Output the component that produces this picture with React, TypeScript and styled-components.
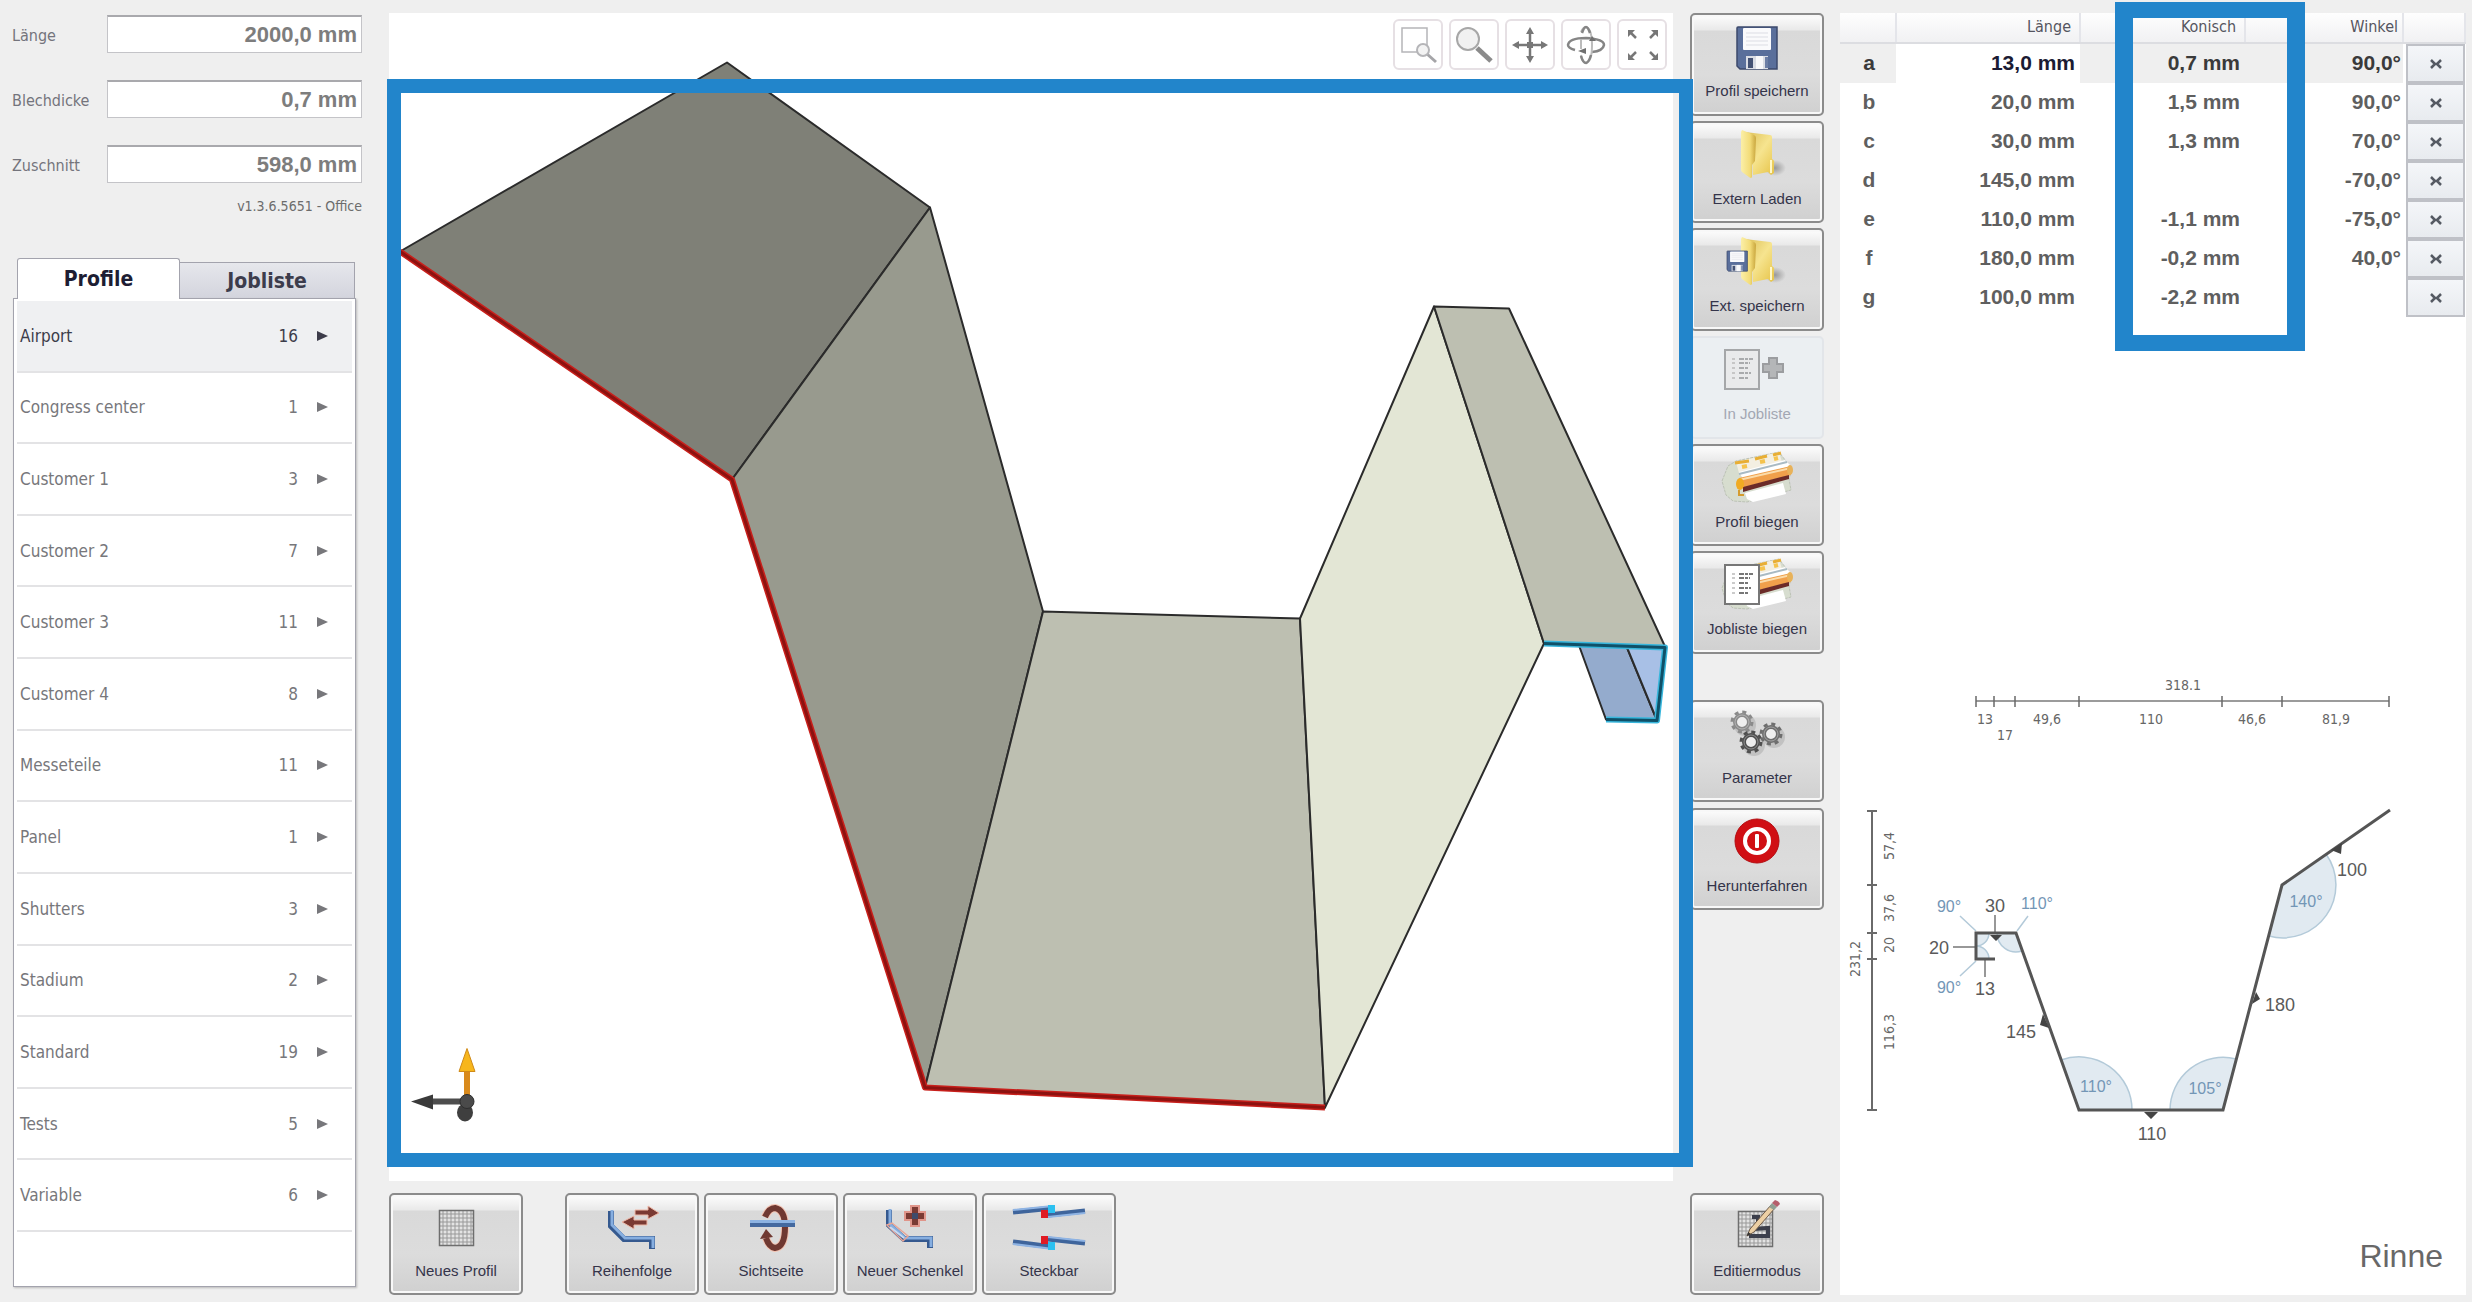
import React, { useState } from "react";
import styled, { createGlobalStyle, css } from "styled-components";

const uiFont = `"DejaVu Sans Condensed", "Noto Sans", sans-serif`;
const numberFont = `"Liberation Sans", Arial, sans-serif`;
const highlight = "#2285cb";

const GlobalStyle = createGlobalStyle`
  * { box-sizing: border-box; }
  body { margin: 0; background: #efefef; font-family: ${uiFont}; }
  button, input { font-family: inherit; margin: 0; }
`;

/* ---------- page frame ---------- */

const Page = styled.main`
  display: grid;
  grid-template-columns: 350px minmax(0, 1fr) 135px 641px;
  min-height: 100vh;
  padding: 13px 6px 7px 12px;
`;

const Sidebar = styled.aside`
  display: flex;
  flex-direction: column;
  padding-bottom: 8px;
`;

const Center = styled.section`
  display: flex;
  flex-direction: column;
  gap: 12px;
  margin: 0 17px 0 27px;
`;

const Actions = styled.nav`
  display: flex;
  flex-direction: column;
`;

const Panel = styled.section`
  position: relative;
  display: flex;
  flex-direction: column;
  margin-left: 15px;
  background: #fff;
`;

/* ---------- sidebar ---------- */

const Fields = styled.form`
  display: grid;
  gap: 27px;
  padding-top: 2px;
`;

const Field = styled.div`
  display: grid;
  grid-template-columns: 95px 1fr;
  align-items: center;
  height: 38px;
`;

const FieldLabel = styled.label`
  padding-top: 2px;
  font-size: 16px;
  color: #74747c;
`;

const FieldInput = styled.input`
  width: 100%;
  height: 38px;
  padding: 0 4px;
  border: 1px solid #c4c4c8;
  border-top: 2px solid #a9a9ad;
  background: #fff;
  color: #7d7d7d;
  font: bold 22px ${numberFont};
  text-align: right;
`;

const Version = styled.p`
  margin: 13px 0 42px;
  font-size: 14px;
  line-height: 20px;
  text-align: right;
  color: #6c6c6c;
`;

const Tabs = styled.div`
  display: grid;
  grid-template-columns: 163px 175px;
  align-items: end;
  padding-left: 5px;
`;

const Tab = styled.button<{ $active?: boolean }>`
  height: 36px;
  padding: 0;
  border: 1px solid #a3a3ad;
  border-left: 0;
  border-bottom: 0;
  background: linear-gradient(#e6e7ec, #d3d4dd);
  color: #3c3c4c;
  font-size: 21px;
  font-weight: bold;
  line-height: 32px;
  ${(p) =>
    p.$active &&
    css`
      position: relative;
      height: 41px;
      margin-bottom: -1px;
      border-left: 1px solid #a3a3ad;
      border-radius: 3px 3px 0 0;
      background: #fff;
      color: #1d1d33;
    `}
`;

const ListBox = styled.div`
  flex: 1;
  width: 343px;
  margin-left: 1px;
  padding: 2px 3px;
  border: 1px solid #a3a3ad;
  background: #fff;
  box-shadow: 1px 1px 2px #bbb;
`;

const List = styled.ul`
  display: grid;
  grid-auto-rows: 1fr;
  height: 931px;
  margin: 0;
  padding: 0;
  list-style: none;
`;

const ListRow = styled.button<{ $active?: boolean }>`
  display: grid;
  grid-template-columns: 1fr 60px 30px;
  align-items: center;
  width: 100%;
  height: 100%;
  padding: 0 24px 0 3px;
  border: 0;
  border-bottom: 2px solid #e3e3e5;
  background: ${(p) => (p.$active ? "#eff0f2" : "#fff")};
  color: ${(p) => (p.$active ? "#3c3c4a" : "#77777b")};
  font-size: 17px;
  text-align: left;
`;

const Count = styled.span`
  text-align: right;
`;

const Arrow = styled.svg`
  justify-self: end;
  width: 11px;
  height: 10px;
  fill: currentColor;
`;

/* ---------- viewport ---------- */

const Viewport = styled.div`
  position: relative;
  flex: 1;
  background: #fff;
`;

const Scene = styled.svg`
  position: absolute;
  inset: 0;
  width: 100%;
  height: 100%;
`;

const ViewTools = styled.div`
  position: relative;
  display: flex;
  justify-content: flex-end;
  gap: 6px;
  padding: 6px 6px 0;
`;

const ViewTool = styled.button`
  width: 50px;
  height: 51px;
  padding: 0;
  border: 2px solid #e6e0e4;
  border-radius: 6px;
  background: #fff;
  svg { display: block; width: 46px; height: 47px; }
`;

const SceneMarker = styled.div`
  position: absolute;
  z-index: 2;
  inset: 66px -20px 14px -2px;
  border: 14px solid ${highlight};
  pointer-events: none;
`;

const ColumnMarker = styled.div`
  position: absolute;
  top: -11px;
  right: 161px;
  width: 190px;
  height: 349px;
  border: solid ${highlight};
  border-width: 16px 18px;
  pointer-events: none;
`;

/* ---------- large push buttons ---------- */

const PushButton = styled.button`
  display: flex;
  flex-direction: column;
  align-items: center;
  gap: 10px;
  width: 134px;
  min-height: 102px;
  padding: 7px 0 0;
  border: 2px solid #8b8b8b;
  border-radius: 5px;
  background: linear-gradient(#fdfdfd 0, #e9e9e9 15px, #d9d9d9 16px, #dcdcdc 60%, #d0d0d0);
  box-shadow: inset 0 0 0 2px #f8f8f8;
  color: #34344a;
  font-family: ${numberFont};
  font-size: 15px;
  line-height: 18px;
  white-space: nowrap;
  &:disabled {
    border-color: #e2e5e9;
    background: #ebeff2;
    box-shadow: none;
    color: #a3a7b3;
  }
`;

const Icon = styled.svg`
  width: 64px;
  height: 50px;
  overflow: visible;
`;

const MainActions = styled.div`
  display: grid;
  grid-auto-rows: 1fr;
  gap: 5px;
  height: 641px;
`;

const SystemActions = styled.div`
  display: grid;
  gap: 6px;
  margin-top: 46px;
`;

const ModeAction = styled.div`
  display: grid;
  margin-top: auto;
`;

const BottomBar = styled.nav`
  display: flex;
  gap: 5px;
  & > :first-child { margin-right: 37px; }
`;

/* ---------- data panel ---------- */

const SegmentTable = styled.table`
  width: 100%;
  table-layout: fixed;
  border-collapse: collapse;
`;

const Head = styled.th<{ $width?: number }>`
  width: ${(p) => (p.$width ? `${p.$width}px` : "auto")};
  height: 30px;
  padding: 0 8px 2px 0;
  border-right: 2px solid #e4e5ea;
  border-bottom: 2px solid #dcdde1;
  background: linear-gradient(#fefefe, #f1f1f3);
  color: #55555f;
  font-size: 16px;
  font-weight: normal;
  text-align: right;
  &:nth-child(4) { padding-right: 4px; }
`;

const Row = styled.tr<{ $active?: boolean }>`
  height: 39px;
  color: ${(p) => (p.$active ? "#3a3a3a" : "#5f5f5f")};
  background: ${(p) => (p.$active ? "#efefef" : "#fff")};
`;

const Cell = styled.td<{ $pad?: number; $edit?: boolean }>`
  padding: 0 ${(p) => p.$pad ?? 5}px 2px 0;
  font: bold 21px ${numberFont};
  text-align: right;
  ${(p) => p.$edit && css`background: #fff; color: #1b1b33;`}
`;

const NameCell = styled.th`
  padding: 0 0 2px 2px;
  font: bold 21px ${numberFont};
  text-align: center;
`;

const ActionCell = styled.td`
  padding: 0 0 0 3px;
  background: #fff;
`;

const RemoveButton = styled.button`
  display: grid;
  place-items: center;
  width: 100%;
  height: 39px;
  padding: 0;
  border: 2px solid #bfc1c7;
  background: linear-gradient(#f4f6f9, #e8ebef);
  svg { width: 12px; height: 10px; }
`;

const Section = styled.svg`
  width: 100%;
  margin-top: auto;
`;

const ProfileName = styled.h1`
  margin: 76px 23px 19px 0;
  font: 32px/40px ${numberFont};
  color: #686868;
  text-align: right;
`;

const Dim = styled.text`
  font: 14px ${uiFont};
  fill: #666;
  text-anchor: middle;
`;

const Len = styled.text`
  font: 18px ${numberFont};
  fill: #5a5a5a;
  text-anchor: middle;
`;

const Angle = styled.text`
  font: 16px ${numberFont};
  fill: #7396b6;
  text-anchor: middle;
`;

/* ---------- icons ---------- */

const Floppy = () => (
  <>
    <path d="M0 1Q0 0 1 0H40V42H3L0 39Z" fill="#5a6f9b" stroke="#3d4a6c" strokeWidth="1.5" />
    <rect x="6" y="1" width="28" height="22" rx="1" fill="#fafafc" />
    <path d="M9 6H31M9 10H31M9 14H31M9 18H31" stroke="#dcdde4" />
    <rect x="9" y="29" width="22" height="13" fill="#d9dce4" />
    <rect x="11" y="31" width="5" height="10" fill="#445274" />
    <rect x="19" y="29" width="7" height="13" fill="#f8f8fa" />
    <rect x="28" y="30" width="3" height="11" fill="#6c7ea5" />
  </>
);

const Folder = () => (
  <>
    <defs>
      <linearGradient id="flap" x1="0" x2="1">
        <stop offset="0" stopColor="#fbefa8" />
        <stop offset=".6" stopColor="#f3dc78" />
        <stop offset="1" stopColor="#c9a63e" />
      </linearGradient>
      <linearGradient id="back" x1="0" x2="1" y2="1">
        <stop offset="0" stopColor="#dcbf58" />
        <stop offset=".5" stopColor="#f6e48f" />
        <stop offset="1" stopColor="#e6c347" />
      </linearGradient>
      <radialGradient id="folderShade">
        <stop offset="0" stopColor="#888" stopOpacity=".8" />
        <stop offset="1" stopColor="#888" stopOpacity="0" />
      </radialGradient>
    </defs>
    <ellipse cx="50" cy="38" rx="11" ry="8" fill="url(#folderShade)" />
    <path d="M20 2L45 5Q47 5 47 7V29Q50 30 49 34V43L46 45L43 42L28 45L26 6Z" fill="url(#back)" />
    <path d="M17 0L29 5Q31 6 31 8L30 31L27 35V47Q26 49 24 47L17 42Q16 41 16 39V2Z" fill="url(#flap)" />
    <path d="M46 30V43" stroke="#fff8c8" strokeWidth="2" />
  </>
);

const Sheet = ({ muted }: { muted?: boolean }) => (
  <>
    <rect x="0" y="5" width="34" height="39" fill={muted ? "#e9eaeb" : "#fff"} stroke={muted ? "#a5a7a9" : "#777"} strokeWidth="2" />
    <path d="M7 14H10M7 18H10M7 23H10M7 28H10M7 33H10" stroke="#bbb" strokeWidth="1.5" />
    <path d="M14 14H28M14 18H25M14 23H24M14 28H26M14 33H23" stroke={muted ? "#a9abad" : "#777"} strokeWidth="2" strokeDasharray="5 1 3 1" />
  </>
);

const Machine = () => (
  <>
    <path d="M-3 28L3 13L11 8L54 -1L67 16L64 26L66 37L22 49L8 48L1 42Z" fill="#d7ddcf" stroke="#bcc2b6" strokeDasharray="3 1" />
    <path d="M11 9L54 -1L57 9L14 20Z" fill="#f3efe2" />
    <path d="M10 10L24 8M30 6L42 3M48 2L56 0" stroke="#e8ae34" strokeWidth="3" />
    <path d="M17 14L22 13M35 9L40 8M49 6L53 5" stroke="#f5c34d" strokeWidth="4" />
    <path d="M14 19L60 7L66 13L18 26Z" fill="#fff" />
    <path d="M14 21L62 9" stroke="#a9bac3" strokeWidth="2" />
    <path d="M14 25L66 13V22L16 35Z" fill="#f0a04b" />
    <path d="M14 27L66 15" stroke="#fbdcaa" strokeWidth="2" />
    <path d="M18 34L64 22V26L18 39Z" fill="#6b2b28" />
    <path d="M20 40L58 30L61 41L28 49L22 46Z" fill="#fff" />
    <ellipse cx="15" cy="31" rx="4" ry="6" fill="#f0ab22" />
    <ellipse cx="65" cy="17" rx="3" ry="5" fill="#e8b25a" />
    <path d="M14 37V42H19" stroke="#d59c2e" strokeWidth="2" fill="none" />
  </>
);

const Gear = ({ x, y, tone }: { x: number; y: number; tone: string }) => (
  <g transform={`translate(${x} ${y})`}>
    <circle r="10" fill="none" stroke={tone} strokeWidth="3" strokeDasharray="4 3.85" />
    <circle r="7" fill="#eee" stroke={tone} strokeWidth="4" />
    <circle r="7" fill="none" stroke="#fff" strokeWidth="1" opacity=".35" />
  </g>
);

const GridPaper = ({ x, y }: { x: number; y: number }) => (
  <g transform={`translate(${x} ${y})`}>
    <rect width="35" height="36" fill="#e3e3e3" />
    <path
      d="M4 0V36M8 0V36M12 0V36M16 0V36M20 0V36M24 0V36M28 0V36M32 0V36M0 4H35M0 8H35M0 12H35M0 16H35M0 20H35M0 24H35M0 28H35M0 32H35"
      stroke="#999"
    />
    <rect x=".5" y=".5" width="34" height="35" fill="none" stroke="#6e6e6e" strokeWidth="1.5" />
  </g>
);

const Plus = ({ x, y, fill, stroke }: { x: number; y: number; fill: string; stroke: string }) => (
  <path
    transform={`translate(${x} ${y})`}
    d="M-4 -10H4V-4H10V4H4V10H-4V4H-10V-4H-4Z"
    fill={fill}
    stroke={stroke}
    strokeWidth="2"
  />
);

const Sheetmetal = ({ d }: { d: string }) => (
  <>
    <path d={d} fill="none" stroke="#35598f" strokeWidth="6" />
    <path d={d} fill="none" stroke="#86aee0" strokeWidth="3" transform="translate(1 -1)" />
  </>
);

const icons: Record<string, React.ReactNode> = {
  save: <g transform="translate(12 5)"><Floppy /></g>,
  folder: <Folder />,
  folderSave: (
    <>
      <Folder />
      <g transform="translate(2 14) scale(.51 .48)"><Floppy /></g>
    </>
  ),
  addJob: (
    <>
      <Sheet muted />
      <Plus x={48} y={23} fill="#b4b6b8" stroke="#9b9da0" />
    </>
  ),
  bend: <Machine />,
  bendJobs: (
    <>
      <Machine />
      <Sheet />
    </>
  ),
  gears: (
    <>
      <g opacity=".25" transform="translate(3 3)">
        <circle cx="17" cy="13" r="11" fill="#777" />
        <circle cx="26" cy="33" r="11" fill="#777" />
        <circle cx="46" cy="25" r="11" fill="#777" />
      </g>
      <Gear x={17} y={13} tone="#8a8a8a" />
      <Gear x={46} y={25} tone="#6e6e6e" />
      <Gear x={26} y={33} tone="#505050" />
    </>
  ),
  power: (
    <>
      <circle cx="32" cy="24" r="22" fill="#d00f14" stroke="#b30c10" />
      <circle cx="32" cy="24" r="12" fill="none" stroke="#fff" strokeWidth="4" />
      <rect x="30" y="17" width="4" height="14" rx="1" fill="#fff" />
    </>
  ),
  grid: <GridPaper x={15} y={8} />,
  edit: (
    <>
      <GridPaper x={13} y={9} />
      <path d="M27 15H33V21L29 27L43 26V34H24" fill="none" stroke="#3c3f4c" strokeWidth="4" />
      <path d="M22 34L25 27L46 3L50 6L29 30Z" fill="#eccfa4" stroke="#6e5a48" />
      <path d="M44 5L47 1L52 5L49 8Z" fill="#8fa093" />
      <path d="M47 1L50 -2Q54 -1 55 2L52 5Z" fill="#b5606c" />
      <path d="M22 34L23 30L26 32Z" fill="#333" />
    </>
  ),
  order: (
    <>
      <Sheetmetal d="M11 9V24L24 37H52V47" />
      <g fill="#7a3a33" stroke="#f0b9a8" strokeWidth="1">
        <path d="M35 8H48V4L59 11L48 17V13H35Z" />
        <path d="M47 18H34V14L22 20L34 27V23H47Z" />
      </g>
    </>
  ),
  side: (
    <>
      <path d="M26 15Q30 6 36 6Q46 8 46 25Q46 45 36 46Q30 45 27 36" fill="none" stroke="#f3c3b2" strokeWidth="8" />
      <path d="M26 15Q30 6 36 6Q46 8 46 25Q46 45 36 46Q30 45 27 36" fill="none" stroke="#6f3831" strokeWidth="6" />
      <path d="M21 37L27 27L34 35Z" fill="#6f3831" />
      <rect x="11" y="18" width="45" height="7" fill="#44699f" />
      <rect x="11" y="18" width="45" height="3" fill="#8db3e2" />
    </>
  ),
  addLeg: (
    <>
      <Sheetmetal d="M11 8V23L26 37H52V46" />
      <path d="M9 23L14 21L30 34L25 39Z" fill="none" stroke="#e8a596" strokeWidth="1.5" />
      <path d="M12 25L26 36" stroke="#c9daf0" strokeWidth="2" />
      <Plus x={37} y={14} fill="#7a3a33" stroke="#e0958a" />
      <rect x="34" y="11" width="6" height="6" fill="#3f4b6b" />
    </>
  ),
  plug: (
    <>
      <path d="M-4 10L36 6M31 13L68 9M-4 40L36 45M31 37L68 41" stroke="#3f659c" strokeWidth="5" />
      <path d="M-4 8L36 4M31 15L68 11M-4 42L36 47M31 35L68 39" stroke="#8fb4e4" strokeWidth="2" />
      <rect x="31" y="3" width="7" height="8" fill="#2cc0f0" />
      <rect x="24" y="8" width="7" height="8" fill="#e01b24" />
      <rect x="24" y="34" width="7" height="8" fill="#e01b24" />
      <rect x="31" y="40" width="7" height="8" fill="#2cc0f0" />
    </>
  ),
};

const tools: { name: string; art: React.ReactNode }[] = [
  {
    name: "Bereich zoomen",
    art: (
      <>
        <rect x="9" y="9" width="25" height="24" fill="none" stroke="#b5b5b8" strokeWidth="1.5" />
        <path d="M34 35L43 43" stroke="#a5a5a8" strokeWidth="3" />
        <circle cx="30" cy="31" r="6" fill="#f3f3f3" stroke="#b5b5b8" strokeWidth="2" />
      </>
    ),
  },
  {
    name: "Zoom",
    art: (
      <>
        <path d="M28 29L42 42" stroke="#8b8b8b" strokeWidth="5" />
        <circle cx="19" cy="20" r="11" fill="#f1f1f1" stroke="#a7a7a7" strokeWidth="2" />
      </>
    ),
  },
  {
    name: "Verschieben",
    art: (
      <>
        <path d="M10 26H40M25 11V41" stroke="#777" strokeWidth="2.5" />
        <path d="M7 26L14 22V30ZM43 26L36 22V30ZM25 8L21 15H29ZM25 44L21 37H29Z" fill="#777" />
        <rect x="22" y="23" width="6" height="6" fill="#777" />
      </>
    ),
  },
  {
    name: "Drehen",
    art: (
      <>
        <path d="M14 31Q7 29 7 26Q8 19 25 19Q43 20 43 26Q42 32 31 33" fill="none" stroke="#858585" strokeWidth="2.5" />
        <path d="M20 13Q22 8 25 8Q31 10 31 26Q31 43 25 44Q21 43 20 36" fill="none" stroke="#bcbcbc" strokeWidth="2" />
        <path d="M21 14Q23 8 25 8Q27 8 29 14M20 37Q22 44 25 44Q28 43 30 36" fill="none" stroke="#858585" strokeWidth="2.5" />
        <path d="M20 30V20" stroke="#bbb" strokeWidth="2" />
        <path d="M17 32L25 29V35ZM31 17L28 22H35Z" fill="#707070" />
      </>
    ),
  },
  {
    name: "Einpassen",
    art: (
      <>
        <path d="M12 12L19 19M40 12L33 19M12 40L19 33M40 40L33 33" stroke="#777" strokeWidth="2.5" />
        <path d="M11 18V11H18ZM34 11H41V18ZM11 34V41H18ZM41 34V41H34Z" fill="#777" />
      </>
    ),
  },
];

/* ---------- data ---------- */

const fields = [
  ["laenge", "Länge", "2000,0 mm"],
  ["blechdicke", "Blechdicke", "0,7 mm"],
  ["zuschnitt", "Zuschnitt", "598,0 mm"],
];

const folders: [string, number][] = [
  ["Airport", 16],
  ["Congress center", 1],
  ["Customer 1", 3],
  ["Customer 2", 7],
  ["Customer 3", 11],
  ["Customer 4", 8],
  ["Messeteile", 11],
  ["Panel", 1],
  ["Shutters", 3],
  ["Stadium", 2],
  ["Standard", 19],
  ["Tests", 5],
  ["Variable", 6],
];

const segments = [
  ["a", "13,0 mm", "0,7 mm", "90,0°"],
  ["b", "20,0 mm", "1,5 mm", "90,0°"],
  ["c", "30,0 mm", "1,3 mm", "70,0°"],
  ["d", "145,0 mm", "", "-70,0°"],
  ["e", "110,0 mm", "-1,1 mm", "-75,0°"],
  ["f", "180,0 mm", "-0,2 mm", "40,0°"],
  ["g", "100,0 mm", "-2,2 mm", ""],
];

const mainActions = [
  { icon: "save", label: "Profil speichern" },
  { icon: "folder", label: "Extern Laden" },
  { icon: "folderSave", label: "Ext. speichern" },
  { icon: "addJob", label: "In Jobliste", disabled: true },
  { icon: "bend", label: "Profil biegen" },
  { icon: "bendJobs", label: "Jobliste biegen" },
];

const systemActions = [
  { icon: "gears", label: "Parameter" },
  { icon: "power", label: "Herunterfahren" },
];

const bottomActions = [
  { icon: "grid", label: "Neues Profil" },
  { icon: "order", label: "Reihenfolge" },
  { icon: "side", label: "Sichtseite" },
  { icon: "addLeg", label: "Neuer Schenkel" },
  { icon: "plug", label: "Steckbar" },
];

function Action({ icon, label, disabled }: { icon: string; label: string; disabled?: boolean }) {
  return (
    <PushButton type="button" disabled={disabled}>
      <Icon viewBox="0 0 64 50" aria-hidden="true">{icons[icon]}</Icon>
      {label}
    </PushButton>
  );
}

function Model() {
  return (
    <Scene viewBox="389 13 1284 1167" aria-label="3D-Ansicht">
      <g stroke="#2b2b2b" strokeWidth="2" strokeLinejoin="round">
        <path d="M400 251L727 62L930 207L732 479Z" fill="#7f8077" />
        <path d="M930 207L1043 611L925 1087L732 479Z" fill="#989a8e" />
        <path d="M1043 611L1300 618L1325 1107L925 1087Z" fill="#bdbfb1" />
        <path d="M1300 618L1434 306L1544 643L1325 1107Z" fill="#e3e6d5" />
        <path d="M1434 306L1509 308L1665 646L1544 643Z" fill="#bdbfb1" />
        <path d="M1579 645L1606 719L1657 720L1627 647Z" fill="#94abcd" />
        <path d="M1627 647L1657 720L1665 647Z" fill="#a8c0e6" />
      </g>
      <g fill="none" strokeLinejoin="round">
        <path d="M400 251L732 479L925 1087L1325 1107" stroke="#c8201c" strokeWidth="6" />
        <path d="M400 251L732 479L925 1087L1325 1107" stroke="#8c1210" strokeWidth="3" />
        <path d="M1544 643L1665 647L1657 720L1606 719" stroke="#38b6dc" strokeWidth="6" />
        <path d="M1544 643L1665 647L1657 720L1606 719" stroke="#0f5068" strokeWidth="3" />
      </g>
      <rect x="464" y="1068" width="6" height="30" fill="#d98a1c" />
      <path d="M467 1048L475 1071H459Z" fill="#f7b61c" stroke="#d08a18" />
      <rect x="431" y="1098" width="32" height="6" fill="#4d4d4d" />
      <path d="M411 1101L433 1094V1109Z" fill="#3a3a3a" />
      <ellipse cx="465" cy="1112" rx="8" ry="9" fill="#3f3f3f" />
      <circle cx="467" cy="1101" r="7" fill="#4a4a4a" stroke="#2e2e2e" />
    </Scene>
  );
}

function CrossSection() {
  const vertical: [number, number, string][] = [
    [1894, 846, "57,4"],
    [1894, 908, "37,6"],
    [1894, 945, "20"],
    [1894, 1032, "116,3"],
    [1860, 959, "231,2"],
  ];
  return (
    <Section viewBox="1840 660 626 500" aria-label="Profilquerschnitt">
      <path d="M1976 701H2389" stroke="#9b9b9b" strokeWidth="2" />
      <path
        d="M1976 696V707M1994 696V707M2015 696V707M2079 696V707M2222 696V707M2282 696V707M2389 696V707"
        stroke="#6a6a6a"
        strokeWidth="1.5"
      />
      <Dim x="2183" y="690">318.1</Dim>
      <Dim x="1985" y="724">13</Dim>
      <Dim x="2005" y="740">17</Dim>
      <Dim x="2047" y="724">49,6</Dim>
      <Dim x="2151" y="724">110</Dim>
      <Dim x="2252" y="724">46,6</Dim>
      <Dim x="2336" y="724">81,9</Dim>

      <path d="M1872 811V1110" stroke="#6a6a6a" strokeWidth="2" />
      <path d="M1867 811H1877M1867 885H1877M1867 933H1877M1867 959H1877M1867 1110H1877" stroke="#6a6a6a" strokeWidth="2" />
      {vertical.map(([x, y, t]) => (
        <Dim key={t} transform={`translate(${x} ${y}) rotate(-90)`}>{t}</Dim>
      ))}

      <g fill="#e1eaf1" stroke="#b3cad9" strokeWidth="1.5">
        <path d="M2079 1110L2061 1060A53 53 0 0 1 2132 1110Z" />
        <path d="M2223 1110H2170A53 53 0 0 1 2236 1059Z" />
        <path d="M2282 885L2269 936A53 53 0 0 0 2326 854Z" />
        <path d="M2016 933H1997A19 19 0 0 0 2022 951Z" />
        <path d="M1976 933H1989A13 13 0 0 1 1976 946Z" />
        <path d="M1976 959H1989A13 13 0 0 0 1976 946Z" />
        <path d="M1976 931L1960 916M2017 931L2028 916M1976 961L1960 976" />
      </g>
      <path d="M1995 915V933M1953 947H1976M1985 959V977" stroke="#777" strokeWidth="1.5" />
      <path
        d="M1995 959H1976V933H2016L2079 1110H2223L2282 885L2390 810"
        fill="none"
        stroke="#555"
        strokeWidth="3"
      />
      <path
        d="M1990 935H2002L1996 941ZM2144 1112H2158L2151 1119ZM2043 1014L2040 1025L2049 1028ZM2256 992L2260 999L2252 1004ZM2331 850L2342 843L2341 854Z"
        fill="#444"
      />
      <Len x="1995" y="912">30</Len>
      <Len x="1939" y="954">20</Len>
      <Len x="1985" y="995">13</Len>
      <Len x="2021" y="1038">145</Len>
      <Len x="2152" y="1140">110</Len>
      <Len x="2280" y="1011">180</Len>
      <Len x="2352" y="876">100</Len>
      <Angle x="1949" y="912">90°</Angle>
      <Angle x="2037" y="909">110°</Angle>
      <Angle x="1949" y="993">90°</Angle>
      <Angle x="2096" y="1092">110°</Angle>
      <Angle x="2205" y="1094">105°</Angle>
      <Angle x="2306" y="907">140°</Angle>
    </Section>
  );
}

export default function App() {
  const [selected, setSelected] = useState("Airport");
  return (
    <>
      <GlobalStyle />
      <Page>
        <Sidebar>
          <Fields>
            {fields.map(([id, label, value]) => (
              <Field key={id}>
                <FieldLabel htmlFor={id}>{label}</FieldLabel>
                <FieldInput id={id} defaultValue={value} />
              </Field>
            ))}
          </Fields>
          <Version>v1.3.6.5651 - Office</Version>
          <Tabs role="tablist">
            <Tab type="button" role="tab" aria-selected="true" $active>Profile</Tab>
            <Tab type="button" role="tab" aria-selected="false">Jobliste</Tab>
          </Tabs>
          <ListBox>
            <List>
              {folders.map(([name, count]) => (
                <li key={name}>
                  <ListRow type="button" $active={name === selected} onClick={() => setSelected(name)}>
                    <span>{name}</span>
                    <Count>{count}</Count>
                    <Arrow viewBox="0 0 11 10" aria-hidden="true"><path d="M0 0L11 5L0 10Z" /></Arrow>
                  </ListRow>
                </li>
              ))}
            </List>
          </ListBox>
        </Sidebar>

        <Center>
          <Viewport>
            <Model />
            <ViewTools>
              {tools.map((t) => (
                <ViewTool key={t.name} type="button" aria-label={t.name}>
                  <svg viewBox="2 2 46 47" aria-hidden="true">{t.art}</svg>
                </ViewTool>
              ))}
            </ViewTools>
            <SceneMarker />
          </Viewport>
          <BottomBar>
            {bottomActions.map((a) => <Action key={a.label} {...a} />)}
          </BottomBar>
        </Center>

        <Actions>
          <MainActions>
            {mainActions.map((a) => <Action key={a.label} {...a} />)}
          </MainActions>
          <SystemActions>
            {systemActions.map((a) => <Action key={a.label} {...a} />)}
          </SystemActions>
          <ModeAction>
            <Action icon="edit" label="Editiermodus" />
          </ModeAction>
        </Actions>

        <Panel>
          <SegmentTable>
            <thead>
              <tr>
                <Head $width={56} aria-label="Schenkel" />
                <Head $width={184}>Länge</Head>
                <Head>Konisch</Head>
                <Head $width={158}>Winkel</Head>
                <Head $width={62} aria-label="Entfernen" />
              </tr>
            </thead>
            <tbody>
              {segments.map(([name, length, cone, angle], i) => (
                <Row key={name} $active={i === 0}>
                  <NameCell scope="row">{name}</NameCell>
                  <Cell $edit={i === 0}>{length}</Cell>
                  <Cell>{cone}</Cell>
                  <Cell $pad={2}>{angle}</Cell>
                  <ActionCell>
                    <RemoveButton type="button" aria-label={`${name} entfernen`}>
                      <svg viewBox="0 0 12 10" aria-hidden="true">
                        <path d="M1 1L5 5L1 9M11 1L7 5L11 9M4 5H8" fill="none" stroke="#555a63" strokeWidth="2.5" />
                      </svg>
                    </RemoveButton>
                  </ActionCell>
                </Row>
              ))}
            </tbody>
          </SegmentTable>
          <CrossSection />
          <ProfileName>Rinne</ProfileName>
          <ColumnMarker />
        </Panel>
      </Page>
    </>
  );
}
